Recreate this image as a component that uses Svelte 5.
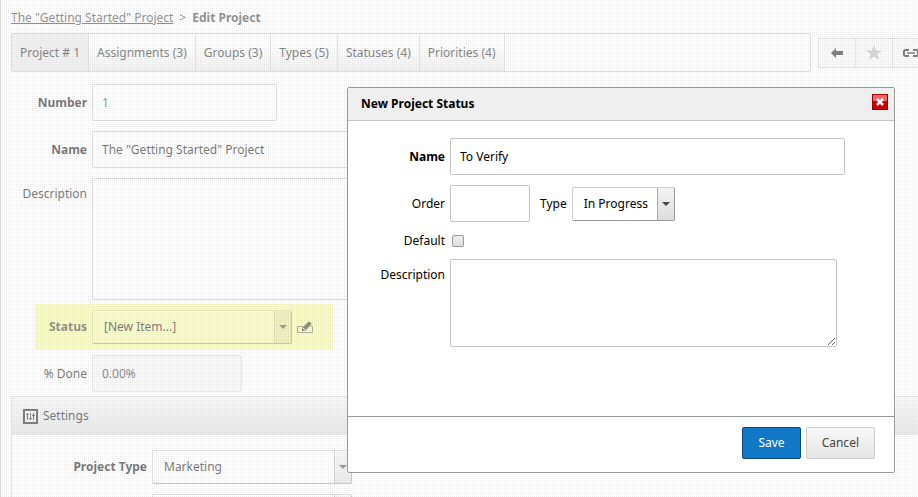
<script lang="ts">
	let tabs = ['Project # 1', 'Assignments (3)', 'Groups (3)', 'Types (5)', 'Statuses (4)', 'Priorities (4)'];
	let active = $state(0);
	let open = $state(true);

	let project = $state({
		number: '1',
		name: 'The "Getting Started" Project',
		description: '',
		status: '[New Item...]',
		done: '0.00%',
		type: 'Marketing'
	});

	let status = $state({
		name: 'To Verify',
		order: '',
		type: 'In Progress',
		isDefault: false,
		description: ''
	});

	function close() {
		open = false;
	}
</script>

<div class="page">
	<main>
		<nav class="crumbs">
			<a href="#project">{project.name}</a>
			<span>&gt;</span>
			<strong>Edit Project</strong>
		</nav>

		<div class="bar">
			<div class="tabs">
				{#each tabs as tab, i}
					<button class="tab" class:active={active === i} onclick={() => (active = i)}>{tab}</button>
				{/each}
			</div>
			<div class="tools">
				<button aria-label="Back">
					<svg width="12" height="10" viewBox="0 0 12 10"><path d="M0 5L5 0V3H12V7H5V10Z" fill="#111" /></svg>
				</button>
				<button aria-label="Favorite">
					<svg width="16" height="15" viewBox="0 0 16 15"><path d="M8 0L10 5.5H16L11.3 9L13 15L8 11.5L3 15L4.700 9L0 5.500H6Z" fill="#b4b4b4" /></svg>
				</button>
				<button aria-label="Link">
					<svg width="16" height="8" viewBox="0 0 16 8" fill="none" stroke="#111" stroke-width="2">
						<path d="M6 1H2.500Q1 1 1 2.500V5.500Q1 7 2.500 7H6M10 1H13.500Q15 1 15 2.500V5.500Q15 7 13.500 7H10" />
						<path d="M4 4H12" stroke-width="1.500" />
					</svg>
				</button>
			</div>
		</div>

		<form class="project">
			<div class="row">
				<label class="bold" for="number">Number</label>
				<input id="number" class="number" bind:value={project.number} />
			</div>
			<div class="row">
				<label class="bold" for="name">Name</label>
				<input id="name" class="wide" bind:value={project.name} />
			</div>
			<div class="row top">
				<label for="description">Description</label>
				<textarea id="description" class="wide" bind:value={project.description}></textarea>
			</div>
			<div class="row highlight">
				<label class="bold" for="status">Status</label>
				<div class="select status">
					<select id="status" bind:value={project.status}>
						<option>[New Item...]</option>
					</select>
				</div>
				<button type="button" class="edit" aria-label="Edit status">
					<svg width="16" height="13" viewBox="0 0 16 13">
						<path d="M6 5.500H.5V11.500H15.500V5.500H14" fill="none" stroke="#664" />
						<path d="M5 10V7L11 1Q12 0 13 1L14 2Q15 3 14 4L8 10Z" fill="#331" />
						<path d="M6 7L8 9" stroke="#fff" />
					</svg>
				</button>
			</div>
			<div class="row">
				<label for="done">% Done</label>
				<input id="done" class="done" readonly value={project.done} />
			</div>
		</form>

		<section class="settings">
			<h2>
				<svg width="15" height="15" viewBox="0 0 15 15" fill="none">
					<rect x="1" y="1" width="13" height="13" stroke="#111" stroke-width="2" />
					<path d="M4.500 4V11M7.500 4V11M10.500 4V11M3 5.500H6M6 9.500H9M9 6.500H12" stroke="#222" />
				</svg>
				Settings
			</h2>
			<div class="fields">
				<div class="row">
					<label class="bold" for="type">Project Type</label>
					<div class="select">
						<select id="type" bind:value={project.type}>
							<option>Marketing</option>
						</select>
					</div>
				</div>
				<div class="row">
					<span></span>
					<div class="select">
						<select aria-label="Category"></select>
					</div>
				</div>
			</div>
		</section>
	</main>

	{#if open}
		<div class="overlay"></div>
		<div class="dialog" role="dialog" aria-labelledby="dialog-title">
			<header>
				<h1 id="dialog-title">New Project Status</h1>
				<button class="close" aria-label="Close" onclick={close}>
					<svg width="8" height="8" viewBox="0 0 8 8"><path d="M1 1L7 7M7 1L1 7" stroke="#fff" stroke-width="2.500" /></svg>
				</button>
			</header>
			<div class="body">
				<div class="row">
					<label class="bold" for="s-name">Name</label>
					<input id="s-name" class="s-name" bind:value={status.name} />
				</div>
				<div class="row">
					<label for="s-order">Order</label>
					<input id="s-order" class="order" bind:value={status.order} />
					<label class="inline" for="s-type">Type</label>
					<div class="select s-type">
						<select id="s-type" bind:value={status.type}>
							<option>In Progress</option>
						</select>
					</div>
				</div>
				<div class="row check">
					<label for="s-default">Default</label>
					<input id="s-default" type="checkbox" bind:checked={status.isDefault} />
				</div>
				<div class="row top">
					<label for="s-description">Description</label>
					<textarea id="s-description" bind:value={status.description}></textarea>
				</div>
			</div>
			<footer>
				<button class="btn save" onclick={close}>Save</button>
				<button class="btn" onclick={close}>Cancel</button>
			</footer>
		</div>
	{/if}
</div>

<style>
	:global(body) {
		background: #fff;
	}

	.page,
	.page * {
		box-sizing: border-box;
	}

	.page {
		position: relative;
		height: 100vh;
		overflow: hidden;
		font: 12px/18px 'Noto Sans', 'Open Sans', sans-serif;
		color: #000;
	}

	button,
	input,
	select,
	textarea {
		font: inherit;
		color: inherit;
	}

	main {
		padding: 9px 0 0 10px;
		border-left: 1px solid #c4c4c4;
	}

	.crumbs {
		display: flex;
		gap: 6px;
		color: #333;
	}

	.crumbs a {
		color: #333;
	}

	.bar {
		display: flex;
		align-items: center;
		gap: 7px;
		margin-top: 6px;
	}

	.tabs {
		display: flex;
		flex: 1;
		height: 39px;
		border: 1px solid #c4c4c4;
		border-radius: 2px;
	}

	.tab {
		padding: 0 8px;
		border: 0;
		border-right: 1px solid #ccc;
		background: linear-gradient(#fff 30%, #e6e6e6);
		color: #111;
		white-space: nowrap;
	}

	.tab.active {
		background: #e6e6e6;
	}

	.tools {
		display: flex;
		flex: none;
		margin-right: -11px;
	}

	.tools button {
		display: flex;
		align-items: center;
		justify-content: center;
		width: 38px;
		height: 30px;
		margin-right: -1px;
		padding: 0;
		border: 1px solid #d0d0d0;
		background: #f6f6f6;
	}

	.row {
		display: flex;
		align-items: center;
	}

	.row.top {
		align-items: flex-start;
	}

	.row.top label {
		padding-top: 7px;
	}

	label {
		flex: none;
		text-align: right;
	}

	.bold {
		font-weight: bold;
	}

	input,
	textarea {
		height: 37px;
		padding: 0 9px;
		border: 1px solid #c4c4c4;
		border-radius: 2px;
		background: #fff;
		outline: none;
	}

	textarea {
		display: block;
	}

	.project {
		display: flex;
		flex-direction: column;
		gap: 10px;
		margin-top: 12px;
	}

	.project label {
		width: 76px;
		margin-right: 5px;
	}

	.number {
		width: 185px;
		color: #246;
	}

	.wide {
		width: 50%;
	}

	textarea.wide {
		height: 122px;
		resize: none;
	}

	.done {
		width: 150px;
		border-color: #d8d8d8;
		background: #f4f4f4;
		color: #222;
	}

	.project .highlight {
		width: 298px;
		height: 46px;
		margin: -6px 0 -5px 24px;
		background: #f8fe84;
	}

	.project .highlight label {
		width: 52px;
		color: #331;
	}

	.select {
		position: relative;
		flex: none;
		width: 200px;
	}

	.select::after {
		content: '';
		position: absolute;
		top: 15px;
		right: 5px;
		border: 4px solid transparent;
		border-top-color: #444;
		border-bottom: 0;
		pointer-events: none;
	}

	select {
		display: block;
		width: 100%;
		height: 34px;
		padding: 0 18px 0 11px;
		border: 1px solid #ccc;
		border-right-color: #999;
		border-bottom-color: #999;
		border-radius: 2px;
		background: linear-gradient(90deg, #aaa 1px, transparent 1px) right / 17px 100% no-repeat,
			linear-gradient(#f3f3f3, #ddd) right / 17px 100% no-repeat, #fff;
		appearance: none;
		outline: none;
	}

	.status select {
		border-color: #d8d878 #999955 #999955 #d8d878;
		background: linear-gradient(90deg, #c4c468 1px, #e4e674 1px) right / 17px 100% no-repeat, #f8fe90;
	}

	.edit {
		display: flex;
		margin-left: 5px;
		padding: 0;
		border: 0;
		background: none;
	}

	.settings {
		margin-top: 4px;
		border: 1px solid #d0d0d0;
		border-right: 0;
	}

	h2 {
		display: flex;
		align-items: center;
		gap: 5px;
		height: 38px;
		margin: 0;
		padding: 0 11px;
		background: linear-gradient(#f2f2f2, #d8d8d8);
		font: inherit;
	}

	.fields {
		display: flex;
		flex-direction: column;
		gap: 10px;
		padding-top: 15px;
	}

	.fields .row > :first-child {
		width: 135px;
		margin-right: 5px;
	}

	.overlay {
		position: absolute;
		inset: 0;
		background: conic-gradient(transparent 75%, rgba(170, 170, 170, 0.22) 0) 0 0 / 2px 2px, rgba(255, 255, 255, 0.45);
	}

	.dialog {
		position: absolute;
		top: 87px;
		left: 347px;
		right: 23px;
		max-width: 600px;
		border: 1px solid #999;
		border-radius: 2px;
		background: #fff;
	}

	.dialog header {
		display: flex;
		justify-content: space-between;
		height: 33px;
		padding: 6px 6px 0 13px;
		border-bottom: 1px solid #c4c4c4;
		background: #efefef;
	}

	h1 {
		margin: 1px 0 0;
		font-size: 12px;
		line-height: 18px;
	}

	.close {
		display: flex;
		align-items: center;
		justify-content: center;
		width: 16px;
		height: 16px;
		padding: 0;
		border: 1px solid #900;
		background: linear-gradient(#e66 45%, #c00 45%);
	}

	.body {
		display: flex;
		flex-direction: column;
		gap: 10px;
		height: 295px;
		padding: 17px 49px 0 0;
	}

	.body label {
		width: 97px;
		margin-right: 5px;
	}

	.s-name {
		flex: 1;
	}

	.order {
		width: 80px;
	}

	.body .inline {
		width: auto;
		margin-left: 10px;
	}

	.s-type {
		width: 103px;
	}

	.check {
		height: 17px;
	}

	.check input {
		width: 12px;
		height: 12px;
		margin: 0 2px;
		padding: 0;
		border-color: #999;
		background: linear-gradient(#eee, #ddd);
		appearance: none;
	}

	.body textarea {
		flex: 1;
		height: 88px;
		margin-right: 8px;
	}

	footer {
		display: flex;
		justify-content: flex-end;
		gap: 5px;
		height: 56px;
		padding: 10px 19px 0;
		border-top: 1px solid #999;
	}

	.btn {
		height: 32px;
		padding: 0 15px;
		border: 1px solid #ccc;
		border-radius: 2px;
		background: linear-gradient(#f8f8f8, #e6e6e6);
		color: #444;
	}

	.save {
		border-color: #0a4a80;
		background: #1177c7;
		color: #fff;
	}
</style>
